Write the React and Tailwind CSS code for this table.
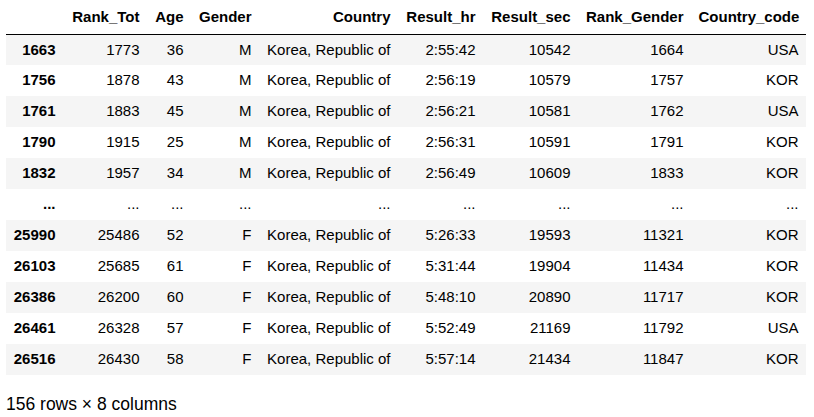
const columns = ["Rank_Tot", "Age", "Gender", "Country", "Result_hr", "Result_sec", "Rank_Gender", "Country_code"];
const widths = ["w-[57px]", "w-[84px]", "w-[44px]", "w-[68px]", "w-[139px]", "w-[85px]", "w-[95px]", "w-[113px]", "w-[115px]"];

const rows = [
  ["1663", "1773", "36", "M", "Korea, Republic of", "2:55:42", "10542", "1664", "USA"],
  ["1756", "1878", "43", "M", "Korea, Republic of", "2:56:19", "10579", "1757", "KOR"],
  ["1761", "1883", "45", "M", "Korea, Republic of", "2:56:21", "10581", "1762", "USA"],
  ["1790", "1915", "25", "M", "Korea, Republic of", "2:56:31", "10591", "1791", "KOR"],
  ["1832", "1957", "34", "M", "Korea, Republic of", "2:56:49", "10609", "1833", "KOR"],
  ["...", "...", "...", "...", "...", "...", "...", "...", "..."],
  ["25990", "25486", "52", "F", "Korea, Republic of", "5:26:33", "19593", "11321", "KOR"],
  ["26103", "25685", "61", "F", "Korea, Republic of", "5:31:44", "19904", "11434", "KOR"],
  ["26386", "26200", "60", "F", "Korea, Republic of", "5:48:10", "20890", "11717", "KOR"],
  ["26461", "26328", "57", "F", "Korea, Republic of", "5:52:49", "21169", "11792", "USA"],
  ["26516", "26430", "58", "F", "Korea, Republic of", "5:57:14", "21434", "11847", "KOR"],
];

export default function App() {
  return (
    <div className="w-[814px] h-[417px] bg-white text-black font-['Liberation_Sans',Arial,sans-serif] text-[15px] px-[6px]">
      <table className="table-fixed border-collapse w-[800px]">
        <colgroup>
          {widths.map((w, i) => (
            <col key={i} className={w} />
          ))}
        </colgroup>
        <thead>
          <tr className="h-[34px] border-b border-black">
            <th className="px-[7.5px] pt-[1px]" />
            {columns.map((c) => (
              <th key={c} className="px-[7.5px] pt-[1px] text-right font-bold whitespace-nowrap">
                {c}
              </th>
            ))}
          </tr>
        </thead>
        <tbody>
          {rows.map((r, i) => (
            <tr key={i} className={i % 2 === 0 ? "h-[31px] bg-[#f5f5f5]" : "h-[31px]"}>
              <th className="px-[7.5px] text-right font-bold whitespace-nowrap">{r[0]}</th>
              {r.slice(1).map((v, j) => (
                <td key={j} className="px-[7.5px] text-right whitespace-nowrap">
                  {v}
                </td>
              ))}
            </tr>
          ))}
        </tbody>
      </table>
      <p className="mt-[19px] text-[17.5px] leading-[20px]">156 rows × 8 columns</p>
    </div>
  );
}
